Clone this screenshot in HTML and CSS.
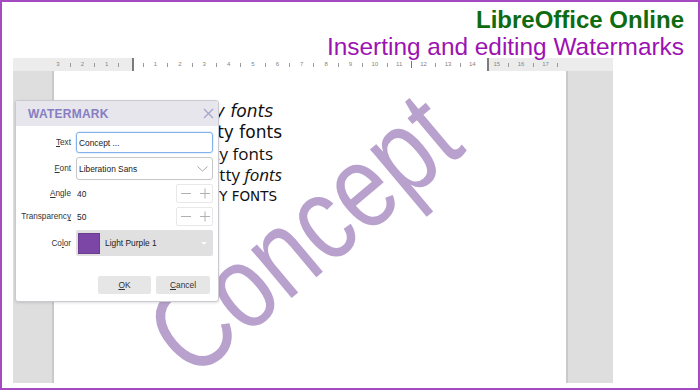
FILE: index.html
```html
<!DOCTYPE html>
<html>
<head>
<meta charset="utf-8">
<link rel="stylesheet" href="styles.css">
</head>
<body>
<div class="frame">
  <header class="head">
    <div class="head-title">LibreOffice Online</div>
    <div class="head-sub">Inserting and editing Watermarks</div>
  </header>
  <div class="workspace">
    <div class="ruler">
      <span class="rn">3</span><span class="rt"></span><span class="rn">2</span><span class="rt"></span><span class="rn">1</span><span class="rt"></span><span class="rn"></span><span class="rt"></span><span class="rn">1</span><span class="rt"></span><span class="rn">2</span><span class="rt"></span><span class="rn">3</span><span class="rt"></span><span class="rn">4</span><span class="rt"></span><span class="rn">5</span><span class="rt"></span><span class="rn">6</span><span class="rt"></span><span class="rn">7</span><span class="rt"></span><span class="rn">8</span><span class="rt"></span><span class="rn">9</span><span class="rt"></span><span class="rn">10</span><span class="rt"></span><span class="rn">11</span><span class="rt dark"></span><span class="rn">12</span><span class="rt"></span><span class="rn">13</span><span class="rt"></span><span class="rn">14</span><span class="rn"></span><span class="rn">15</span><span class="rt"></span><span class="rn">16</span><span class="rt"></span><span class="rn">17</span><span class="rt"></span>
    </div>
    <div class="pagerow">
      <div class="gutter gutter-left"></div>
      <div class="page">
        <div class="doc">
          <div class="line l1">Pretty fonts</div>
          <div class="line l2">Pretty fonts</div>
          <div class="line l3">Pretty fonts</div>
          <div class="line l4">Pretty <i>fonts</i></div>
          <div class="line l5">Pretty fonts</div>
        </div>
        <div class="watermark">Concept</div>
      </div>
      <div class="gutter gutter-right"></div>
    </div>
  </div>

  <div class="dialog">
    <div class="dlg-head">
      <span class="dlg-title">WATERMARK</span>
      <svg class="dlg-close" width="11" height="11" viewBox="0 0 11 11"><path d="M1 1L10 10M10 1L1 10" stroke="#a3a3cf" stroke-width="1.2" fill="none"/></svg>
    </div>
    <div class="dlg-body">
      <label class="lbl"><u>T</u>ext</label>
      <div class="field input focus">Concept ...</div>

      <label class="lbl"><u>F</u>ont</label>
      <div class="field input select">Liberation Sans
        <svg class="chev" width="11" height="6" viewBox="0 0 11 6"><path d="M0.5 0.5L5.5 5L10.5 0.5" stroke="#a8a8a8" stroke-width="1" fill="none"/></svg>
      </div>

      <label class="lbl"><u>A</u>ngle</label>
      <div class="field spinrow"><span class="val">40</span>
        <span class="spin"><svg width="35" height="17" viewBox="0 0 35 17"><path d="M4 8.5H14M23 8.5H33M28 3.5V13.5" stroke="#b0b0b0" stroke-width="1" fill="none"/></svg></span>
      </div>

      <label class="lbl">Transparenc<u>y</u></label>
      <div class="field spinrow"><span class="val">50</span>
        <span class="spin"><svg width="35" height="17" viewBox="0 0 35 17"><path d="M4 8.5H14M23 8.5H33M28 3.5V13.5" stroke="#b0b0b0" stroke-width="1" fill="none"/></svg></span>
      </div>

      <label class="lbl">Co<u>l</u>or</label>
      <div class="field colorpick"><span class="swatch"></span><span class="cname">Light Purple 1</span><span class="tri"></span></div>
    </div>
    <div class="dlg-buttons">
      <button class="btn"><u>O</u>K</button>
      <button class="btn"><u>C</u>ancel</button>
    </div>
  </div>
</div>
</body>
</html>
```

FILE: styles.css
```css
html, body {
  margin: 0;
  padding: 0;
  background: #fff;
}
.frame {
  position: relative;
  width: 700px;
  height: 390px;
  box-sizing: border-box;
  border: 2px solid #a64ac2;
  overflow: hidden;
  font-family: "Liberation Sans", Arial, sans-serif;
}
.head {
  position: relative;
  z-index: 2;
  height: 52px;
  padding: 4px 14px 0 0;
  text-align: right;
  font-size: 24px;
  line-height: 27px;
}
.head-title {
  color: #0e6b10;
  font-weight: bold;
}
.head-sub {
  color: #9c12b2;
  font-size: 24.4px;
}
.workspace {
  margin-left: 11px;
  width: 600px;
}
.ruler {
  height: 13px;
  display: flex;
  padding-left: 38.9px;
  box-sizing: border-box;
  background: linear-gradient(to right, #ececec 0 119px, #7c7c7c 119px 121px, #fff 121px 474px, #7c7c7c 474px 476px, #ececec 476px 600px);
  font-size: 6px;
  color: #858585;
}
.rn, .rt {
  flex: 0 0 12.2px;
  width: 12.2px;
  height: 13px;
  line-height: 13px;
  text-align: center;
  display: flex;
  align-items: center;
  justify-content: center;
}
.rt::before {
  content: "";
  width: 1px;
  height: 4px;
  background: #9a9a9a;
}
.rt.dark::before {
  height: 7px;
  width: 1.5px;
  background: #777;
}
.pagerow {
  display: flex;
  height: 312px;
}
.gutter {
  background: #dedede;
}
.gutter-left {
  width: 41px;
  box-shadow: inset -2px 0 0 #c9c9c9;
}
.gutter-right {
  width: 47px;
  box-shadow: inset 2px 0 0 #cacaca;
}
.page {
  position: relative;
  width: 512px;
  background: #fff;
}
.doc {
  width: 228px;
  padding-top: 30px;
  display: flex;
  flex-direction: column;
  align-items: flex-end;
  color: #111;
}
.line {
  height: 21px;
  line-height: 21px;
  font-size: 17px;
  white-space: nowrap;
  font-family: "DejaVu Sans", sans-serif;
}
.l1 {
  font-style: oblique;
  margin-right: 9px;
}
.l3 {
  font-family: "Open Sans", sans-serif;
  margin-right: 9px;
}
.l4 {
  font-family: "Open Sans", sans-serif;
}
.l5 {
  font-size: 13.5px;
  text-transform: uppercase;
  margin-right: 5px;
  line-height: 22px;
  height: 22px;
}
.watermark {
  position: absolute;
  left: 50%;
  top: 50%;
  transform: translate(calc(-50% - 7px), calc(-50% + 7px)) rotate(-40deg) scale(1.05, 1.3);
  font-size: 92px;
  line-height: 1;
  color: #b9a1cd;
  white-space: nowrap;
}
.dialog {
  position: absolute;
  z-index: 5;
  left: 13px;
  top: 98px;
  width: 204px;
  height: 202px;
  box-sizing: border-box;
  background: #fff;
  border: 1px solid #c9c9cf;
  border-radius: 3px;
  box-shadow: 0 1px 3px rgba(0, 0, 0, 0.12);
}
.dlg-head {
  height: 25px;
  background: #e6e6ec;
  display: flex;
  align-items: center;
  justify-content: space-between;
  padding: 0 4px 0 12px;
  border-radius: 3px 3px 0 0;
}
.dlg-title {
  color: #877dc2;
  font-weight: bold;
  font-size: 12px;
  letter-spacing: 0.25px;
}
.dlg-close {
  display: block;
}
.dlg-body {
  display: grid;
  grid-template-columns: 55px 137px;
  grid-template-rows: 21px 23px 19px 19px 26px;
  column-gap: 5px;
  row-gap: 4px;
  padding-top: 6px;
  font-size: 8.2px;
  color: #333;
}
.lbl {
  text-align: right;
  align-self: center;
  white-space: nowrap;
}
.field {
  box-sizing: border-box;
  font-size: 8.4px;
  color: #222;
  display: flex;
  align-items: center;
}
.input {
  border: 1px solid #c6c6c6;
  border-radius: 3px;
  padding-left: 2px;
}
.input.focus {
  border-color: #84b2ea;
  box-shadow: 0 0 0 0.5px #cfe1f7;
}
.select {
  justify-content: space-between;
  padding-right: 4px;
}
.spinrow {
  justify-content: space-between;
  padding-left: 1px;
}
.spin {
  width: 37px;
  height: 19px;
  box-sizing: border-box;
  border: 1px solid #e8e8e8;
  border-radius: 2px;
  display: flex;
}
.colorpick {
  background: #e0e0e0;
  border-radius: 2px;
  padding-left: 2px;
}
.swatch {
  width: 22px;
  height: 21px;
  box-sizing: border-box;
  background: #7b46a5;
  border: 1px solid #6c3b92;
}
.cname {
  margin-left: 5px;
  flex: 1;
}
.tri {
  width: 0;
  height: 0;
  border-left: 3px solid transparent;
  border-right: 3px solid transparent;
  border-top: 3px solid #fafafa;
  margin-right: 6px;
}
.dlg-buttons {
  display: flex;
  justify-content: flex-end;
  gap: 5px;
  padding: 20px 8px 0 0;
}
.btn {
  height: 18px;
  border: none;
  border-radius: 2px;
  background: #e6e6e6;
  font-family: "Liberation Sans", Arial, sans-serif;
  font-size: 8.4px;
  color: #333;
  padding: 0;
}
.btn:first-child {
  width: 53px;
}
.btn:last-child {
  width: 54px;
}
```
